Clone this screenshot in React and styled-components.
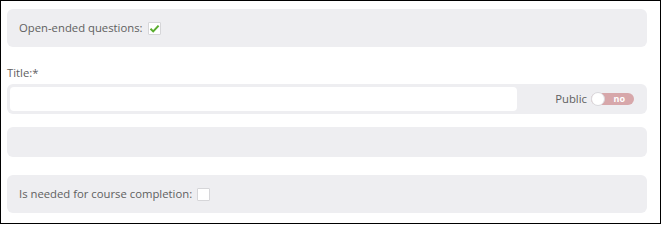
import React from "react";
import styled, { createGlobalStyle } from "styled-components";

const Global = createGlobalStyle`
  html, body { margin: 0; padding: 0; background: #fff; }
  body { font-family: "Open Sans", "Liberation Sans", sans-serif; }
  * { box-sizing: border-box; }
`;

const Frame = styled.div`
  width: 661px;
  height: 224px;
  border: 1px solid #000;
  padding: 8px 13px 0 6px;
  display: flex;
  flex-direction: column;
`;

const Panel = styled.div`
  background: #eeeef1;
  border-radius: 6px;
  height: ${(p) => p.$h}px;
  margin-top: ${(p) => p.$mt || 0}px;
  display: flex;
  align-items: center;
  padding: ${(p) => p.$pad || "0 0 0 12px"};
`;

const Label = styled.span`
  font-size: 11.3px;
  color: #606060;
  line-height: 16px;
`;

const FieldLabel = styled.div`
  font-size: 11.3px;
  color: #606060;
  line-height: 16px;
  margin-top: 18px;
`;

const Check = styled.span`
  display: inline-flex;
  align-items: center;
  justify-content: center;
  width: 13px;
  height: 13px;
  margin-left: 5px;
  background: #fff;
  border: 1px solid #d6d6d9;
  border-radius: 1px;
`;

const Input = styled.div`
  width: 507px;
  height: 24px;
  background: #fff;
  border-radius: 4px;
`;

const Spacer = styled.div`
  flex: 1;
`;

const Toggle = styled.span`
  position: relative;
  display: inline-block;
  width: 43px;
  height: 12px;
  margin-left: 4px;
  background: #d7a7aa;
  border-radius: 6px;
`;

const Knob = styled.span`
  position: absolute;
  left: 0;
  top: -1px;
  width: 14px;
  height: 14px;
  border-radius: 50%;
  background: #fff;
  border: 1px solid #d9d9dd;
`;

const ToggleText = styled.span`
  position: absolute;
  right: 9px;
  top: -2px;
  font-size: 9px;
  font-weight: 700;
  color: #fff;
  line-height: 16px;
`;

export default function App() {
  return (
    <>
      <Global />
      <Frame>
        <Panel $h={38}>
          <Label>Open-ended questions:</Label>
          <Check>
            <svg width="11" height="11" viewBox="0 0 11 11">
              <path d="M1.5 5.8 L4.2 8.4 L9.6 2.6" fill="none" stroke="#5aad2f" strokeWidth="2" />
            </svg>
          </Check>
        </Panel>
        <FieldLabel>Title:*</FieldLabel>
        <Panel $h={30} $mt={3} $pad="0 13px 0 3px">
          <Input />
          <Spacer />
          <Label>Public</Label>
          <Toggle>
            <Knob />
            <ToggleText>no</ToggleText>
          </Toggle>
        </Panel>
        <Panel $h={30} $mt={13} />
        <Panel $h={38} $mt={18}>
          <Label>Is needed for course completion:</Label>
          <Check />
        </Panel>
      </Frame>
    </>
  );
}
